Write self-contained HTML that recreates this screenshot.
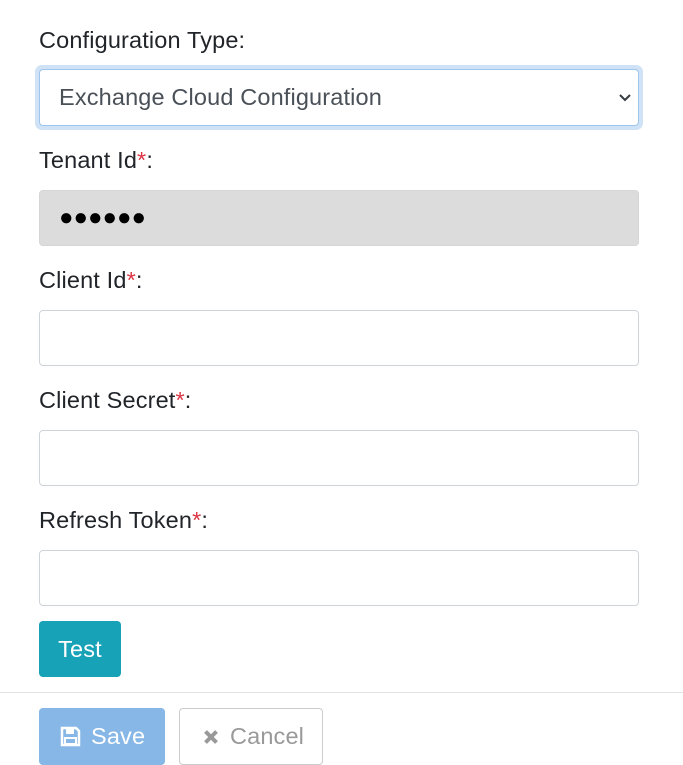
<!DOCTYPE html><html><head><style>
body{margin:0;width:683px;height:765px;overflow:hidden;background:#fff;font-family:"Liberation Sans",sans-serif;color:#212529;font-size:23.5px;letter-spacing:0.15px;position:relative}
.a{position:absolute}
.lbl{left:39px;line-height:26px}
.req{color:#dc3545}
.in{left:39px;width:598px;height:54px;border:1px solid #ced4da;border-radius:4px;background:#fff;box-sizing:content-box}
</style></head><body>
<div class="a lbl" style="top:27px">Configuration Type:</div>
<div class="a" style="left:35px;top:65px;width:608px;height:65px;border-radius:7px;background:#cfe2f6"></div>
<div class="a in" style="top:69px;height:55px;border-color:#9ec5ec;color:#495057;"><span class="a" style="left:19px;top:14px">Exchange Cloud Configuration</span>
<svg class="a" style="left:578px;top:22px" width="14" height="12" viewBox="0 0 14 12"><path d="M2 3l5 5 5-5" fill="none" stroke="#343a40" stroke-width="2"/></svg></div>
<div class="a lbl" style="top:147px">Tenant Id<span class="req">*</span>:</div>
<div class="a in" style="top:190px;background:#dcdcdc;border-color:#d6d6d6"><span class="a" style="left:19px;top:13px;font-size:24px;letter-spacing:0px;color:#000">●●●●●●</span></div>
<div class="a lbl" style="top:267px">Client Id<span class="req">*</span>:</div>
<div class="a in" style="top:310px"></div>
<div class="a lbl" style="top:387px">Client Secret<span class="req">*</span>:</div>
<div class="a in" style="top:430px"></div>
<div class="a lbl" style="top:507px">Refresh Token<span class="req">*</span>:</div>
<div class="a in" style="top:550px"></div>
<div class="a" style="left:39px;top:621px;width:82px;height:56px;background:#17a2b8;border-radius:4px;color:#fff;text-align:center;line-height:56px">Test</div>
<div class="a" style="left:0;top:692px;width:683px;height:1px;background:#e3e3e3"></div>
<div class="a" style="left:39px;top:708px;width:126px;height:57px;background:#86b7e6;border-radius:4px;color:#fff;line-height:57px">
<svg class="a" style="left:21px;top:18px" width="21" height="21" viewBox="0 0 21 21"><path d="M2 2h14l3 3v14H2z" fill="none" stroke="#fff" stroke-width="2.5"/><rect x="6" y="3" width="8" height="5" fill="#fff"/><rect x="5" y="12" width="11" height="6" fill="none" stroke="#fff" stroke-width="2"/></svg>
<span class="a" style="left:52px;top:0">Save</span></div>
<div class="a" style="left:179px;top:708px;width:142px;height:55px;border:1px solid #ccc;border-radius:4px;color:#999;line-height:55px">
<svg class="a" style="left:23px;top:20px" width="16" height="16" viewBox="0 0 16 16"><path d="M2.5 2.5l11 11M13.5 2.5l-11 11" stroke="#999" stroke-width="4"/></svg>
<span class="a" style="left:50px;top:0">Cancel</span></div>
</body></html>
